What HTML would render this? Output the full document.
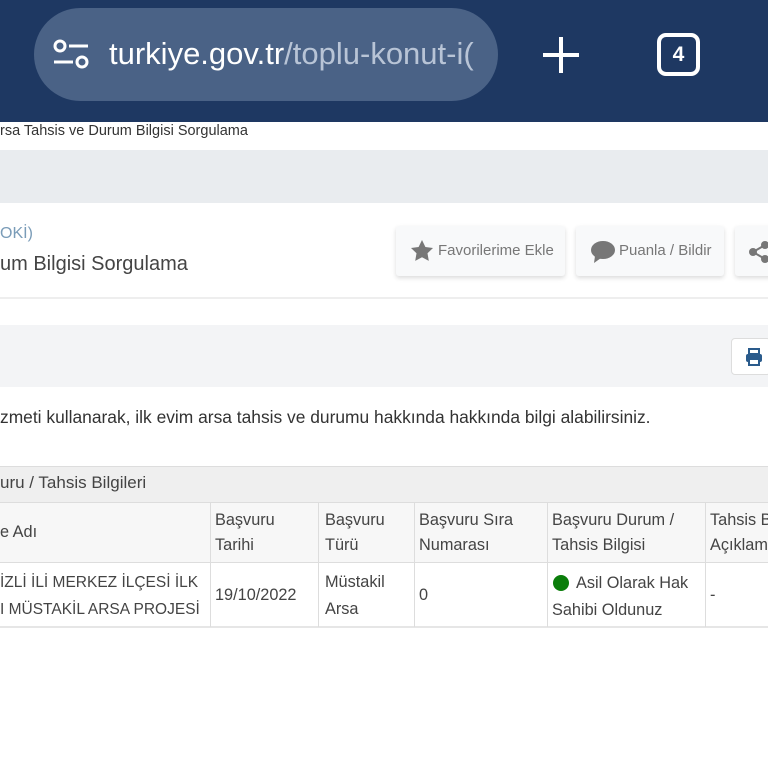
<!DOCTYPE html>
<html><head><meta charset="utf-8"><style>
*{margin:0;padding:0;box-sizing:border-box}
body{width:768px;height:768px;overflow:hidden;background:#fff;font-family:"Liberation Sans","DejaVu Sans",sans-serif;position:relative;color:#333}
.a{position:absolute;white-space:nowrap}
.top{position:absolute;left:0;top:0;width:768px;height:122px;background:#1e3862}
.pill{position:absolute;left:34px;top:8px;width:464px;height:93px;border-radius:47px;background:#4a6286}
.btn{position:absolute;top:226px;height:50px;background:#f8f9fa;box-shadow:0 2px 5px rgba(0,0,0,.15);border-radius:3px;color:#777;font-size:15px;line-height:50px}
.th{position:absolute;font-size:16.3px;color:#444;line-height:25px;white-space:nowrap}
.vl{position:absolute;width:1px;background:#ddd;top:502px;height:125px}
</style></head><body>
<div class="top"></div>
<div class="pill"></div>
<svg class="a" style="left:52px;top:38px" width="38" height="32" viewBox="0 0 38 32"><circle cx="8" cy="8" r="5" fill="none" stroke="#fff" stroke-width="3"/><line x1="17" y1="8" x2="36" y2="8" stroke="#fff" stroke-width="3"/><line x1="2" y1="24" x2="21" y2="24" stroke="#fff" stroke-width="3"/><circle cx="30" cy="24" r="5" fill="none" stroke="#fff" stroke-width="3"/></svg>
<div class="a" style="left:109px;top:36px;width:372px;overflow:hidden;font-size:31px;color:#fff">turkiye.gov.tr<span style="color:#b8c4d6">/toplu-konut-i(</span></div>
<svg class="a" style="left:541px;top:35px" width="40" height="40"><line x1="20" y1="2" x2="20" y2="38" stroke="#fff" stroke-width="4"/><line x1="2" y1="20" x2="38" y2="20" stroke="#fff" stroke-width="4"/></svg>
<div class="a" style="left:657px;top:33px;width:43px;height:43px;border:4px solid #fff;border-radius:9px;color:#fff;font-size:21px;font-weight:bold;text-align:center;line-height:35px">4</div>
<div class="a" style="left:0;top:123px;font-size:14.5px;color:#333">rsa Tahsis ve Durum Bilgisi Sorgulama</div>
<div class="a" style="left:0;top:150px;width:768px;height:53px;background:#e9ecef"></div>
<div class="a" style="left:0;top:297px;width:768px;height:2px;background:#eee"></div>
<div class="a" style="left:0;top:225px;font-size:16px;color:#7a9cb8">OKİ)</div>
<div class="a" style="left:0;top:253px;font-size:20px;color:#444">um Bilgisi Sorgulama</div>
<div class="btn" style="left:396px;width:169px"><svg style="position:absolute;left:14px;top:13px" width="24" height="24" viewBox="0 0 24 24"><path d="M12 1l3.4 7 7.6 1-5.5 5.3 1.3 7.6L12 18.3 5.2 21.9l1.3-7.6L1 9l7.6-1z" fill="#777"/></svg><span style="position:absolute;left:42px">Favorilerime Ekle</span></div>
<div class="btn" style="left:576px;width:148px"><svg style="position:absolute;left:14px;top:14px" width="26" height="24" viewBox="0 0 26 24"><ellipse cx="13" cy="10" rx="12" ry="9" fill="#777"/><path d="M5 16l-1 7 7-5z" fill="#777"/></svg><span style="position:absolute;left:43px">Puanla / Bildir</span></div>
<div class="btn" style="left:735px;width:40px"><svg style="position:absolute;left:14px;top:15px" width="22" height="22"><circle cx="4" cy="11" r="4" fill="#777"/><circle cx="16" cy="4" r="4" fill="#777"/><circle cx="16" cy="18" r="4" fill="#777"/><path d="M4 11L16 4M4 11l12 7" stroke="#777" stroke-width="2"/></svg></div>
<div class="a" style="left:0;top:325px;width:768px;height:62px;background:#f3f4f6"></div>
<div class="a" style="left:731px;top:338px;width:40px;height:37px;background:#fff;border:1px solid #ddd;border-radius:4px"><svg style="position:absolute;left:13px;top:9px" width="18" height="18" viewBox="0 0 18 18"><rect x="4" y="1" width="10" height="5" fill="none" stroke="#2a5b8c" stroke-width="2"/><rect x="1" y="6" width="16" height="8" rx="2" fill="#2a5b8c"/><rect x="4" y="11" width="10" height="6" fill="#fff" stroke="#2a5b8c" stroke-width="2"/></svg></div>
<div class="a" style="left:0;top:407px;font-size:17.4px;color:#333">zmeti kullanarak, ilk evim arsa tahsis ve durumu hakkında hakkında bilgi alabilirsiniz.</div>
<div class="a" style="left:0;top:466px;width:768px;height:37px;background:#efefef;border-top:1px solid #ddd;border-bottom:1px solid #ddd"></div>
<div class="a" style="left:0;top:473px;font-size:17px;color:#444">uru / Tahsis Bilgileri</div>
<div class="a" style="left:0;top:503px;width:768px;height:60px;background:#f7f7f7;border-bottom:1px solid #ddd"></div>
<div class="a" style="left:0;top:626px;width:768px;height:2px;background:#e6e6e6"></div>
<div class="vl" style="left:210px"></div><div class="vl" style="left:318px"></div><div class="vl" style="left:414px"></div><div class="vl" style="left:547px"></div><div class="vl" style="left:705px"></div>
<div class="th" style="left:0;top:520px">e Adı</div>
<div class="th" style="left:215px;top:508px">Başvuru<br>Tarihi</div>
<div class="th" style="left:325px;top:508px">Başvuru<br>Türü</div>
<div class="th" style="left:419px;top:508px">Başvuru Sıra<br>Numarası</div>
<div class="th" style="left:552px;top:508px">Başvuru Durum /<br>Tahsis Bilgisi</div>
<div class="th" style="left:710px;top:508px">Tahsis B<br>Açıklam</div>
<div class="th" style="left:0;top:569px;line-height:27px;font-size:15.5px">İZLİ İLİ MERKEZ İLÇESİ İLK<br>I MÜSTAKİL ARSA PROJESİ</div>
<div class="th" style="left:215px;top:583px">19/10/2022</div>
<div class="th" style="left:325px;top:569px;line-height:27px">Müstakil<br>Arsa</div>
<div class="th" style="left:419px;top:583px">0</div>
<div class="a" style="left:553px;top:575px;width:16px;height:16px;border-radius:50%;background:#0a7d0a"></div>
<div class="th" style="left:552px;top:570px;line-height:27px"><span style="margin-left:24px">Asil Olarak Hak</span><br>Sahibi Oldunuz</div>
<div class="th" style="left:710px;top:583px">-</div>
</body></html>
